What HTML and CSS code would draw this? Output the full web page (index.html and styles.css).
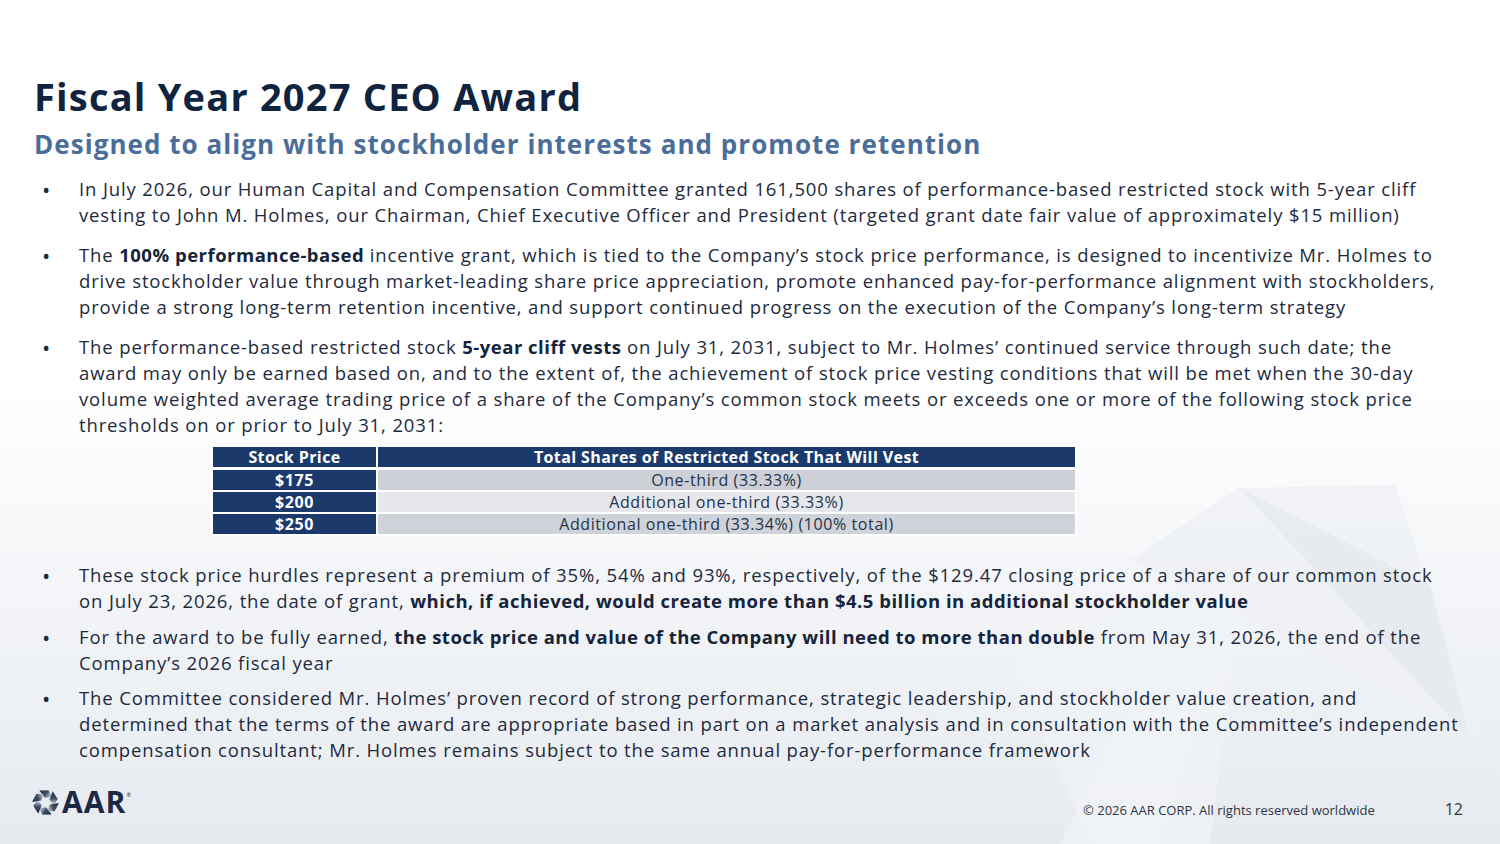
FILE: index.html
```html
<!DOCTYPE html>
<html>
<head>
<meta charset="utf-8">
<link rel="stylesheet" href="styles.css">
</head>
<body>
<div class="slide">
  <svg class="watermark" viewBox="0 0 1500 844" preserveAspectRatio="none" aria-hidden="true">
    <polygon points="1240,488 1395,485 1480,740 1130,560" fill="#eef1f4" opacity="0.9"/>
    <polygon points="1240,488 1430,585 1470,740" fill="#e4e8ed" opacity="0.7"/>
    <polygon points="1240,600 1110,740 1060,844 1210,844" fill="#f0f2f5" opacity="0.8"/>
    <polygon points="1010,660 1250,560 1160,844 1090,844" fill="#f0f3f6" opacity="0.6"/>
  </svg>
  <header class="head">
    <h1 class="title">Fiscal Year 2027 CEO Award</h1>
    <h2 class="subtitle">Designed to align with stockholder interests and promote retention</h2>
  </header>
  <ul class="bullets">
    <li>In July 2026, our Human Capital and Compensation Committee granted 161,500 shares of performance-based restricted stock with 5-year cliff<br>vesting to John M. Holmes, our Chairman, Chief Executive Officer and President (targeted grant date fair value of approximately $15 million)</li>
    <li>The <b>100% performance-based</b> incentive grant, which is tied to the Company’s stock price performance, is designed to incentivize Mr. Holmes to<br>drive stockholder value through market-leading share price appreciation, promote enhanced pay-for-performance alignment with stockholders,<br>provide a strong long-term retention incentive, and support continued progress on the execution of the Company’s long-term strategy</li>
    <li>The performance-based restricted stock <b>5-year cliff vests</b> on July 31, 2031, subject to Mr. Holmes’ continued service through such date; the<br>award may only be earned based on, and to the extent of, the achievement of stock price vesting conditions that will be met when the 30-day<br>volume weighted average trading price of a share of the Company’s common stock meets or exceeds one or more of the following stock price<br>thresholds on or prior to July 31, 2031:</li>
  </ul>
  <table class="vest">
    <thead>
      <tr><th class="c1">Stock Price</th><th class="c2">Total Shares of Restricted Stock That Will Vest</th></tr>
    </thead>
    <tbody>
      <tr class="r1"><td class="c1">$175</td><td class="c2">One-third (33.33%)</td></tr>
      <tr class="r2"><td class="c1">$200</td><td class="c2">Additional one-third (33.33%)</td></tr>
      <tr class="r3"><td class="c1">$250</td><td class="c2">Additional one-third (33.34%) (100% total)</td></tr>
    </tbody>
  </table>
  <ul class="bullets lower">
    <li>These stock price hurdles represent a premium of 35%, 54% and 93%, respectively, of the $129.47 closing price of a share of our common stock<br>on July 23, 2026, the date of grant, <b>which, if achieved, would create more than $4.5 billion in additional stockholder value</b></li>
    <li>For the award to be fully earned, <b>the stock price and value of the Company will need to more than double</b> from May 31, 2026, the end of the<br>Company’s 2026 fiscal year</li>
    <li>The Committee considered Mr. Holmes’ proven record of strong performance, strategic leadership, and stockholder value creation, and<br>determined that the terms of the award are appropriate based in part on a market analysis and in consultation with the Committee’s independent<br>compensation consultant; Mr. Holmes remains subject to the same annual pay-for-performance framework</li>
  </ul>
  <footer class="foot">
    <div class="logo">
      <svg class="logo-mark" viewBox="-13 -13 26 26" aria-hidden="true">
        <defs>
          <linearGradient id="bl" x1="0" y1="0" x2="1" y2="0.4">
            <stop offset="0" stop-color="#1c2a40"/>
            <stop offset="0.6" stop-color="#3d4d63"/>
            <stop offset="1" stop-color="#b4bcc6"/>
          </linearGradient>
        </defs>
        <g fill="url(#bl)">
          <path d="M-6,-11.5 L3,-11.8 L6.2,-5.6 L-0.5,-4.6 Z"/>
          <path d="M-6,-11.5 L3,-11.8 L6.2,-5.6 L-0.5,-4.6 Z" transform="rotate(60)"/>
          <path d="M-6,-11.5 L3,-11.8 L6.2,-5.6 L-0.5,-4.6 Z" transform="rotate(120)"/>
          <path d="M-6,-11.5 L3,-11.8 L6.2,-5.6 L-0.5,-4.6 Z" transform="rotate(180)"/>
          <path d="M-6,-11.5 L3,-11.8 L6.2,-5.6 L-0.5,-4.6 Z" transform="rotate(240)"/>
          <path d="M-6,-11.5 L3,-11.8 L6.2,-5.6 L-0.5,-4.6 Z" transform="rotate(300)"/>
        </g>
      </svg>
      <span class="logo-text">AAR</span><span class="reg">®</span>
    </div>
    <div class="foot-right">
      <span class="copy">© 2026 AAR CORP. All rights reserved worldwide</span>
      <span class="page">12</span>
    </div>
  </footer>
</div>
</body>
</html>
```
FILE: styles.css
```css
html, body {
  margin: 0;
  padding: 0;
}
body {
  width: 1500px;
  height: 844px;
  overflow: hidden;
  font-family: "Open Sans", "Noto Sans", sans-serif;
  color: #1d2a3d;
}
.slide {
  position: relative;
  width: 1500px;
  height: 844px;
  box-sizing: border-box;
  padding: 73px 0 0 0;
  background: linear-gradient(180deg, #ffffff 0%, #ffffff 45%, #f2f4f7 72%, #e6eaef 100%);
  display: flex;
  flex-direction: column;
  overflow: hidden;
}
.watermark {
  position: absolute;
  left: 0;
  top: 0;
  width: 1500px;
  height: 844px;
  z-index: 0;
}
.head, .bullets, .vest, .foot {
  position: relative;
  z-index: 1;
}
.head {
  padding-left: 34px;
}
.title {
  margin: 0;
  font-size: 38px;
  line-height: 46px;
  font-weight: 700;
  color: #10243f;
  letter-spacing: 1.2px;
}
.subtitle {
  margin: 4px 0 0 0;
  font-size: 26px;
  line-height: 42px;
  font-weight: 700;
  color: #4a6d9a;
  letter-spacing: 1.05px;
}
.bullets {
  list-style: none;
  margin: 11px 0 0 0;
  padding: 0 0 0 79px;
  font-size: 18.5px;
  line-height: 26px;
  letter-spacing: 0.87px;
  white-space: nowrap;
}
.bullets li {
  position: relative;
  margin-bottom: 14px;
}
.bullets li::before {
  content: "•";
  position: absolute;
  left: -37px;
  top: 0;
  font-size: 22px;
}
.bullets b {
  font-weight: 700;
  color: #15243a;
  letter-spacing: 0.5px;
}
.vest {
  margin: -5px 0 0 211px;
  width: 866px;
  border-collapse: collapse;
  font-size: 16px;
  line-height: 20px;
  letter-spacing: 0.6px;
  text-align: center;
}
.vest th, .vest td {
  padding: 0;
  border: 2px solid #ffffff;
  border-top-width: 0;
}
.vest th {
  background: #1b3a6b;
  color: #ffffff;
  font-weight: 700;
  border-bottom-width: 3px;
  letter-spacing: 0.4px;
}
.vest td.c1 {
  width: 163px;
  background: #1b3a6b;
  color: #ffffff;
  font-weight: 700;
}
.vest td.c2 {
  color: #24324a;
}
.vest .r1 td.c2 { background: #cdd0d6; }
.vest .r2 td.c2 { background: #e5e7eb; }
.vest .r3 td.c2 { background: #cfd2d8; }
.lower {
  margin-top: 26px;
}
.lower li {
  margin-bottom: 9.5px;
}
.foot {
  margin-top: auto;
  height: 58px;
  display: flex;
  align-items: flex-start;
  justify-content: space-between;
  padding: 0 37px 0 32px;
}
.logo {
  display: flex;
  align-items: center;
}
.logo-mark {
  width: 27px;
  height: 27px;
  margin-right: 3px;
}
.logo-text {
  font-family: "Open Sans", sans-serif;
  font-weight: 700;
  font-size: 30px;
  line-height: 32px;
  color: #1a2a46;
  letter-spacing: 1px;
}
.reg {
  font-size: 6px;
  align-self: flex-start;
  margin-top: 5px;
  color: #1a2a46;
}
.foot-right {
  display: flex;
  align-items: baseline;
  margin-top: 12px;
}
.copy {
  font-size: 13px;
  color: #2a3547;
}
.page {
  margin-left: 70px;
  font-size: 16px;
  color: #2a3547;
}
```
